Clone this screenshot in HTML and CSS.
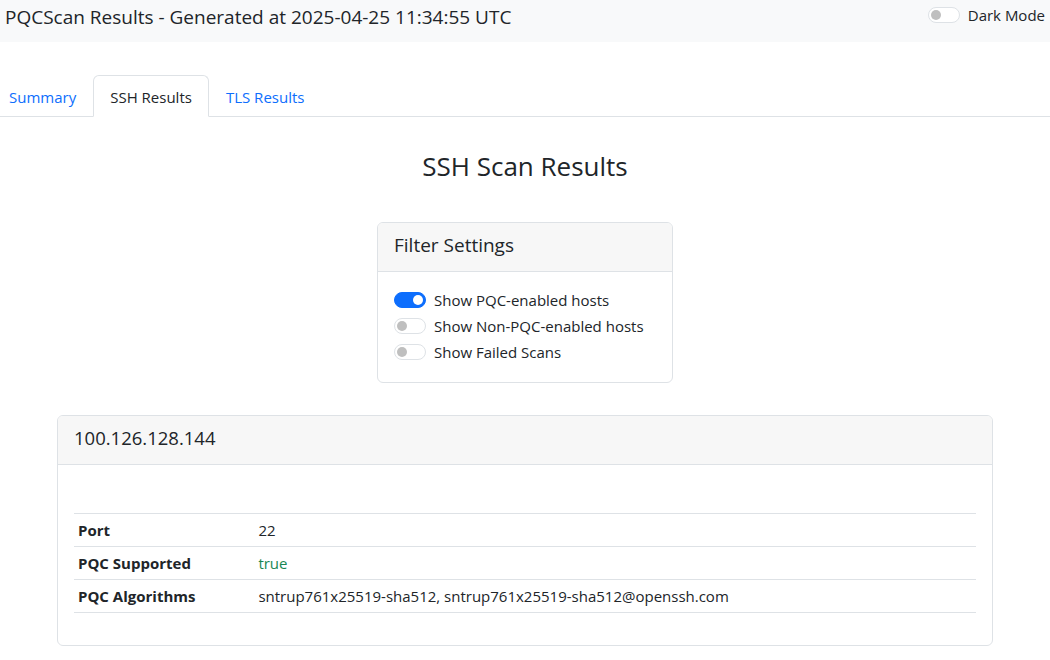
FILE: index.html
```html
<!DOCTYPE html>
<html lang="en">
<head>
<meta charset="utf-8">
<title>PQCScan Results</title>
<link rel="stylesheet" href="styles.css">
</head>
<body>
<header class="topbar">
  <h1 class="title">PQCScan Results - Generated at 2025-04-25 11:34:55 UTC</h1>
  <label class="check dark-toggle"><span class="switch"></span><span>Dark Mode</span></label>
</header>

<nav class="tabs">
  <a class="tab">Summary</a>
  <a class="tab active">SSH Results</a>
  <a class="tab">TLS Results</a>
</nav>

<main class="container">
  <h2 class="page-heading">SSH Scan Results</h2>

  <section class="card filter-card">
    <div class="card-header">Filter Settings</div>
    <div class="card-body">
      <label class="check"><span class="switch on"></span><span>Show PQC-enabled hosts</span></label>
      <label class="check"><span class="switch"></span><span>Show Non-PQC-enabled hosts</span></label>
      <label class="check"><span class="switch"></span><span>Show Failed Scans</span></label>
    </div>
  </section>

  <section class="card host-card">
    <div class="card-header host-header">100.126.128.144</div>
    <div class="card-body">
      <table class="details">
        <tbody>
          <tr><th>Port</th><td>22</td></tr>
          <tr><th>PQC Supported</th><td class="ok">true</td></tr>
          <tr><th>PQC Algorithms</th><td>sntrup761x25519-sha512, sntrup761x25519-sha512@openssh.com</td></tr>
        </tbody>
      </table>
    </div>
  </section>
</main>
</body>
</html>
```

FILE: styles.css
```css
html { overflow: hidden; }
* { box-sizing: border-box; }
body {
  margin: 0;
  font-family: "Open Sans", "Noto Sans", "Liberation Sans", sans-serif;
  font-size: 15px;
  line-height: 24px;
  color: #212529;
  background: #fff;
}

.topbar {
  height: 42px;
  background: #f8f9fa;
  display: flex;
  justify-content: space-between;
  align-items: flex-start;
  padding: 5px 5px 0 5px;
}
.title {
  margin: 0;
  font-size: 19px;
  font-weight: 400;
  line-height: 24px;
}
.dark-toggle { margin-top: -2px; margin-right: 0; }

.check {
  display: flex;
  align-items: center;
  gap: 8px;
  height: 24px;
  margin-bottom: 2px;
  white-space: nowrap;
}
.switch {
  position: relative;
  width: 32px;
  height: 16px;
  border: 1px solid #dee2e6;
  border-radius: 8px;
  background: #fff;
  flex: none;
}
.switch::after {
  content: "";
  position: absolute;
  left: 2px;
  top: 2px;
  width: 10px;
  height: 10px;
  border-radius: 50%;
  background: #bfbfbf;
}
.switch.on { background: #0d6efd; border-color: #0d6efd; }
.switch.on::after { left: auto; right: 2px; background: #fff; }

.tabs {
  display: flex;
  margin-top: 33px;
  padding-left: 0;
  border-bottom: 1px solid #dee2e6;
}
.tab {
  padding: 9px 16px 7px;
  border: 1px solid transparent;
  border-top-left-radius: 6px;
  border-top-right-radius: 6px;
  margin-bottom: -1px;
  color: #0d6efd;
  text-decoration: none;
}
.tab:first-child { margin-left: -8px; }
.tab.active {
  color: #212529;
  background: #fff;
  border-color: #dee2e6 #dee2e6 #fff;
}

.container {
  max-width: 960px;
  margin: 0 auto;
  padding: 0 12px;
}
.page-heading {
  margin: 32px 0 39px;
  text-align: center;
  font-size: 26px;
  font-weight: 400;
  line-height: 34px;
}

.card {
  border: 1px solid #dee2e6;
  border-radius: 6px;
  background: #fff;
}
.card-header {
  padding: 10px 16px 14px;
  font-size: 19px;
  line-height: 24px;
  background: #f7f7f7;
  border-bottom: 1px solid #dee2e6;
  border-radius: 5px 5px 0 0;
}
.host-header { font-size: 18.5px; }
.card-body { padding: 16px; }

.filter-card {
  width: 296px;
  margin: 0 auto 32px;
}

.details {
  width: 100%;
  border-collapse: collapse;
  margin: 32px 0 16px;
  border-top: 1px solid #dee2e6;
}
.details th, .details td {
  padding: 4px;
  text-align: left;
  border-bottom: 1px solid #dee2e6;
  vertical-align: top;
}
.details th { width: 20%; font-weight: 700; }
.details .ok { color: #198754; }
```
